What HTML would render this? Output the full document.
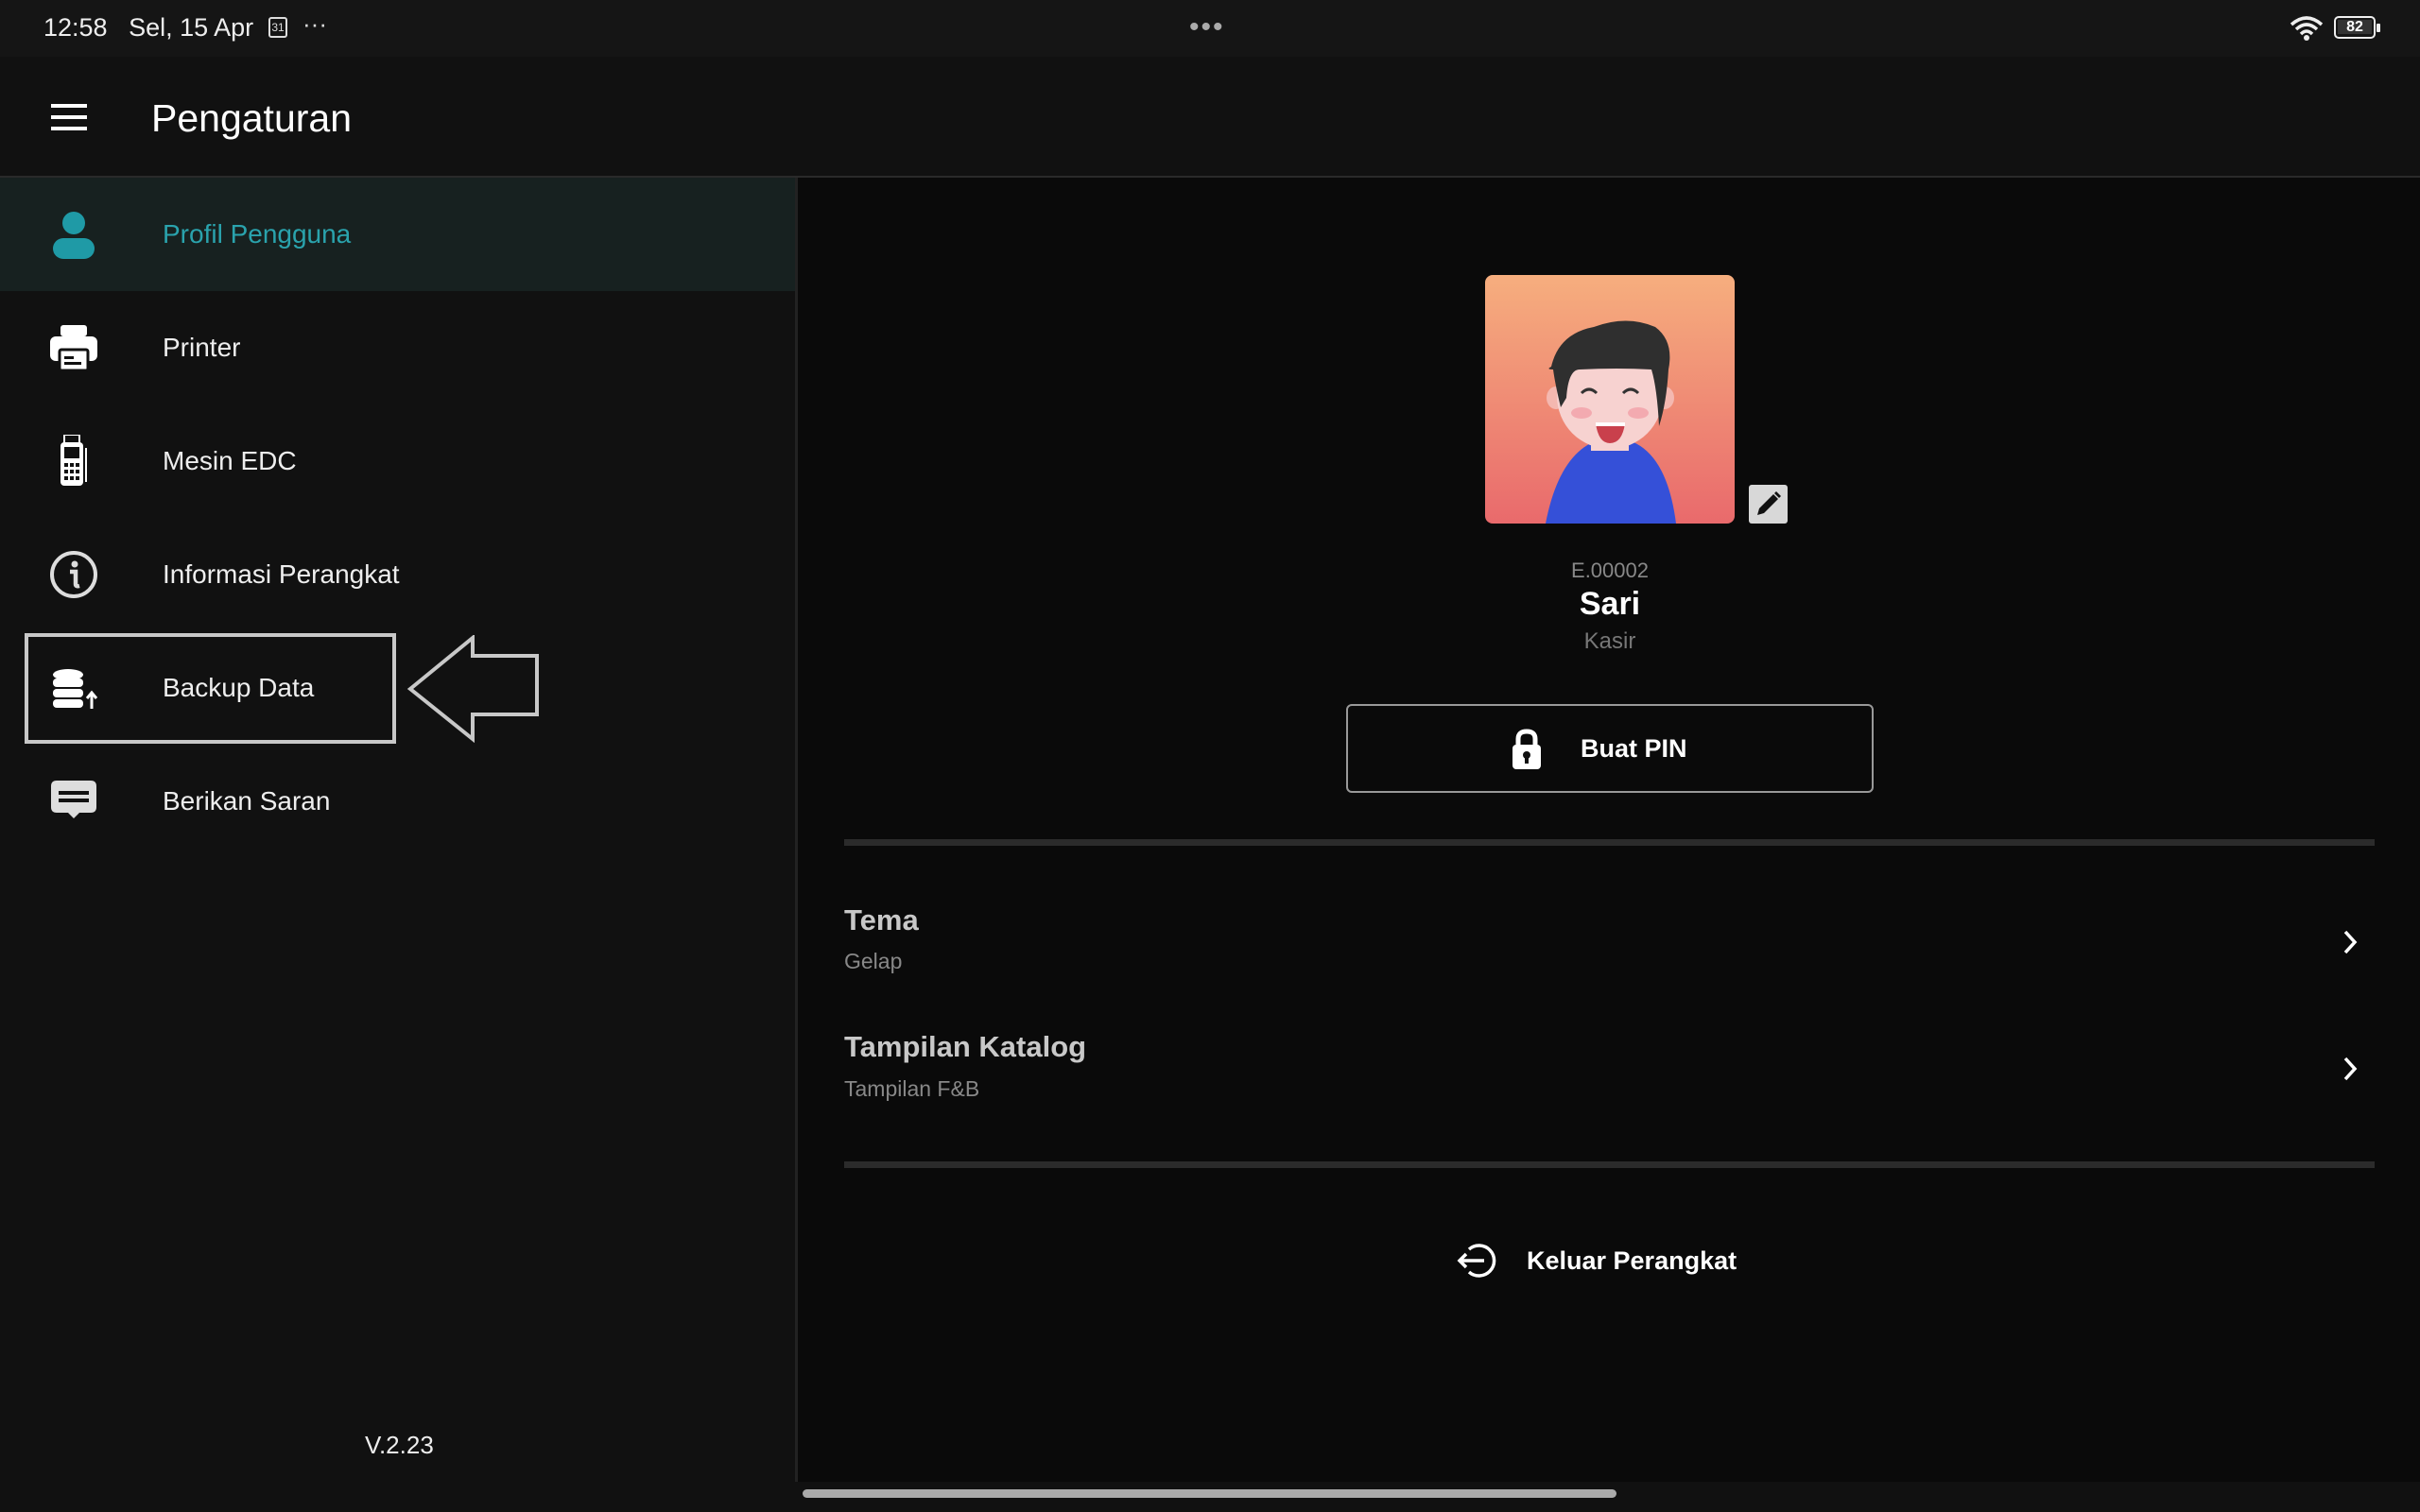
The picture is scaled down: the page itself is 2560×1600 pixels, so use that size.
<!DOCTYPE html>
<html><head><meta charset="utf-8">
<style>
*{margin:0;padding:0;box-sizing:border-box}
body{width:2560px;height:1600px;background:#0a0a0a;font-family:"Liberation Sans",sans-serif;color:#eee;position:relative;overflow:hidden}
.abs{position:absolute}
.status{left:0;top:0;width:2560px;height:60px;background:#151515}
.appbar{left:0;top:60px;width:2560px;height:128px;background:#111;border-bottom:2px solid #2a2a2a}
.side{left:0;top:188px;width:844px;height:1380px;background:#111;border-right:3px solid #222}
.item{position:absolute;left:0;width:841px;height:120px;display:flex;align-items:center}
.item .ic{position:absolute;left:50px;width:56px;height:56px;top:32px}
.item .tx{position:absolute;left:172px;font-size:28px;color:#eee}
.bottom{left:0;top:1568px;width:2560px;height:32px;background:#111}
</style></head><body>
<div class="abs status">
 <div class="abs" style="left:46px;top:14px;font-size:27px;color:#eee">12:58&nbsp;&nbsp; Sel, 15 Apr</div>
 <div class="abs" style="left:284px;top:18px;width:20px;height:22px;border:2px solid #ddd;border-radius:3px;font-size:12px;text-align:center;line-height:18px;color:#ddd">31</div>
 <div class="abs" style="left:320px;top:10px;font-size:26px;color:#ddd">···</div>
 <div class="abs" style="left:1258px;top:12px;font-size:30px;color:#aaa;letter-spacing:2px">•••</div>
 <svg class="abs" style="left:2422px;top:16px" width="36" height="28" viewBox="0 0 36 28"><path d="M2 10 Q18 -4 34 10" stroke="#eee" stroke-width="3.5" fill="none"/><path d="M7 15 Q18 5 29 15" stroke="#eee" stroke-width="3.5" fill="none"/><path d="M12 20 Q18 14 24 20" stroke="#eee" stroke-width="3.5" fill="none"/><circle cx="18" cy="24" r="3" fill="#eee"/></svg>
 <div class="abs" style="left:2469px;top:17px;width:44px;height:24px;border:2.5px solid #eee;border-radius:5px"><div style="margin:2px;background:#333;height:15px;font-size:16px;font-weight:bold;text-align:center;line-height:15px;color:#fff">82</div></div>
 <div class="abs" style="left:2514px;top:25px;width:4px;height:9px;background:#eee;border-radius:1px"></div>
</div>
<div class="abs appbar">
 <div class="abs" style="left:54px;top:50px;width:38px;height:4px;background:#fff"></div>
 <div class="abs" style="left:54px;top:62px;width:38px;height:4px;background:#fff"></div>
 <div class="abs" style="left:54px;top:74px;width:38px;height:4px;background:#fff"></div>
 <div class="abs" style="left:160px;top:42px;font-size:41px;color:#fff">Pengaturan</div>
</div>
<div class="abs side">
 <div class="item" style="top:0;background:#172120">
  <svg class="ic" viewBox="0 0 56 56"><circle cx="28" cy="16" r="12" fill="#1f9aa6"/><rect x="6" y="32" width="44" height="22" rx="11" fill="#1f9aa6"/></svg>
  <div class="tx" style="color:#2aa3ad">Profil Pengguna</div></div>
 <div class="item" style="top:120px">
  <svg class="ic" viewBox="0 0 56 56"><rect x="14" y="4" width="28" height="12" rx="3" fill="#fff"/><rect x="3" y="16" width="50" height="26" rx="6" fill="#fff"/><rect x="13" y="30" width="30" height="22" rx="2" fill="#fff" stroke="#111" stroke-width="3"/><rect x="18" y="37" width="10" height="3" fill="#111"/><rect x="18" y="43" width="18" height="3" fill="#111"/></svg>
  <div class="tx">Printer</div></div>
 <div class="item" style="top:240px">
  <svg class="ic" viewBox="0 0 56 56"><rect x="18" y="0" width="16" height="10" fill="none" stroke="#fff" stroke-width="2"/><rect x="14" y="8" width="24" height="46" rx="4" fill="#fff"/><rect x="18" y="13" width="16" height="12" fill="#111"/><g fill="#111"><rect x="18" y="30" width="4" height="4"/><rect x="24" y="30" width="4" height="4"/><rect x="30" y="30" width="4" height="4"/><rect x="18" y="37" width="4" height="4"/><rect x="24" y="37" width="4" height="4"/><rect x="30" y="37" width="4" height="4"/><rect x="18" y="44" width="4" height="4"/><rect x="24" y="44" width="4" height="4"/><rect x="30" y="44" width="4" height="4"/></g><rect x="40" y="14" width="2" height="36" fill="#fff"/></svg>
  <div class="tx">Mesin EDC</div></div>
 <div class="item" style="top:360px">
  <svg class="ic" viewBox="0 0 56 56"><circle cx="28" cy="28" r="23" fill="none" stroke="#ddd" stroke-width="4"/><circle cx="29" cy="17" r="3.5" fill="#ddd"/><path d="M24 25 H30 V38 Q30 41 34 40" stroke="#ddd" stroke-width="4.5" fill="none"/></svg>
  <div class="tx">Informasi Perangkat</div></div>
 <div class="item" style="top:480px">
  <svg class="ic" viewBox="0 0 56 56"><ellipse cx="22" cy="14" rx="16" ry="6" fill="#fff"/><rect x="6" y="18" width="32" height="9" rx="4" fill="#fff"/><rect x="6" y="29" width="32" height="9" rx="4" fill="#fff"/><rect x="6" y="40" width="32" height="9" rx="4" fill="#fff"/><path d="M47 50 V34 M42 39 L47 33 L52 39" stroke="#fff" stroke-width="3" fill="none"/></svg>
  <div class="tx">Backup Data</div></div>
 <div class="item" style="top:600px">
  <svg class="ic" viewBox="0 0 56 56"><path d="M10 6 H46 Q52 6 52 12 V34 Q52 40 46 40 H34 L28 46 L22 40 H10 Q4 40 4 34 V12 Q4 6 10 6Z" fill="#ddd"/><rect x="12" y="17" width="32" height="4" fill="#111"/><rect x="12" y="25" width="32" height="4" fill="#111"/></svg>
  <div class="tx">Berikan Saran</div></div>
 <div class="abs" style="left:386px;top:1326px;font-size:26px;color:#eee">V.2.23</div>
</div>
<div class="abs" style="left:26px;top:670px;width:393px;height:117px;border:4px solid #c8c8c8"></div>
<svg class="abs" style="left:430px;top:672px" width="142" height="114" viewBox="0 0 142 114"><path d="M4 57 L70 3 V22 H138 V84 H70 V110 Z" fill="none" stroke="#c8c8c8" stroke-width="4"/></svg>

<svg class="abs" style="left:1571px;top:291px" width="264" height="263" viewBox="0 0 264 263">
 <defs><linearGradient id="g" x1="0" y1="0" x2="0" y2="1"><stop offset="0" stop-color="#f6ae7e"/><stop offset="1" stop-color="#e96a6c"/></linearGradient></defs>
 <rect width="264" height="263" rx="8" fill="url(#g)"/>
 <path d="M64 263 Q80 180 130 172 Q190 170 202 263Z" fill="#3550d8"/>
 <rect x="112" y="150" width="40" height="36" fill="#f7d2d0"/>
 <ellipse cx="75" cy="130" rx="10" ry="12" fill="#f4b8b0"/><ellipse cx="190" cy="130" rx="10" ry="12" fill="#f4b8b0"/>
 <ellipse cx="132" cy="128" rx="56" ry="56" fill="#f7d2d0"/>
 <path d="M70 97 Q78 62 115 55 Q150 42 180 55 Q200 70 194 100 Q192 135 184 160 Q182 120 176 100 Q140 98 100 100 Q88 100 86 130 L80 140 Q74 115 72 100 Q64 100 70 97Z" fill="#2f2f2f"/>
 <path d="M102 125 Q110 117 118 125 M146 125 Q154 117 162 125" stroke="#333" stroke-width="3" fill="none"/>
 <ellipse cx="102" cy="146" rx="11" ry="6" fill="#f3aab0"/><ellipse cx="162" cy="146" rx="11" ry="6" fill="#f3aab0"/>
 <path d="M117 157 H148 Q145 178 132 178 Q120 178 117 157Z" fill="#c9404c"/><rect x="117" y="156" width="31" height="4" fill="#fff"/>
</svg>
<div class="abs" style="left:1850px;top:513px;width:41px;height:41px;background:#d8d8d8;border-radius:3px">
 <svg width="41" height="41" viewBox="0 0 41 41"><path d="M9 32 L11 25 L26 10 L31 15 L16 30 Z" fill="#111"/><path d="M27 9 L29 7 L34 12 L32 14Z" fill="#111"/></svg></div>
<div class="abs" style="left:1503px;top:591px;width:400px;text-align:center;font-size:22px;color:#888">E.00002</div>
<div class="abs" style="left:1503px;top:620px;width:400px;text-align:center;font-size:34px;font-weight:bold;color:#fff">Sari</div>
<div class="abs" style="left:1503px;top:665px;width:400px;text-align:center;font-size:24px;color:#777">Kasir</div>
<div class="abs" style="left:1424px;top:745px;width:558px;height:94px;border:2px solid #999;border-radius:6px"></div>
<svg class="abs" style="left:1598px;top:770px" width="34" height="44" viewBox="0 0 34 44"><path d="M8 20 V12 Q8 4 17 4 Q26 4 26 12 V20" stroke="#fff" stroke-width="5" fill="none"/><rect x="2" y="18" width="30" height="26" rx="4" fill="#fff"/><circle cx="17" cy="29" r="4" fill="#111"/><rect x="15" y="30" width="4" height="8" fill="#111"/></svg>
<div class="abs" style="left:1672px;top:777px;font-size:27px;font-weight:bold;color:#fff">Buat PIN</div>
<div class="abs" style="left:893px;top:888px;width:1619px;height:7px;background:#2b2b2b"></div>
<div class="abs" style="left:893px;top:956px;font-size:31px;font-weight:bold;color:#c8c8c8">Tema</div>
<div class="abs" style="left:893px;top:1004px;font-size:23px;color:#888">Gelap</div>
<div class="abs" style="left:893px;top:1090px;font-size:31px;font-weight:bold;color:#c8c8c8">Tampilan Katalog</div>
<div class="abs" style="left:893px;top:1139px;font-size:23px;color:#888">Tampilan F&amp;B</div>
<svg class="abs" style="left:2476px;top:982px" width="20" height="30" viewBox="0 0 20 30"><path d="M5 4 L15 15 L5 26" stroke="#fff" stroke-width="3.5" fill="none"/></svg>
<svg class="abs" style="left:2476px;top:1116px" width="20" height="30" viewBox="0 0 20 30"><path d="M5 4 L15 15 L5 26" stroke="#fff" stroke-width="3.5" fill="none"/></svg>
<div class="abs" style="left:893px;top:1229px;width:1619px;height:7px;background:#2b2b2b"></div>
<svg class="abs" style="left:1540px;top:1314px" width="44" height="40" viewBox="0 0 44 40"><path d="M14 8 A16 16 0 1 1 14 32" stroke="#fff" stroke-width="3.5" fill="none"/><path d="M30 20 H4 M11 13 L4 20 L11 27" stroke="#fff" stroke-width="3.5" fill="none"/></svg>
<div class="abs" style="left:1615px;top:1319px;font-size:27px;font-weight:bold;color:#fff">Keluar Perangkat</div>
<div class="abs bottom"><div class="abs" style="left:849px;top:8px;width:861px;height:9px;border-radius:5px;background:#aaa"></div></div>
</body></html>
